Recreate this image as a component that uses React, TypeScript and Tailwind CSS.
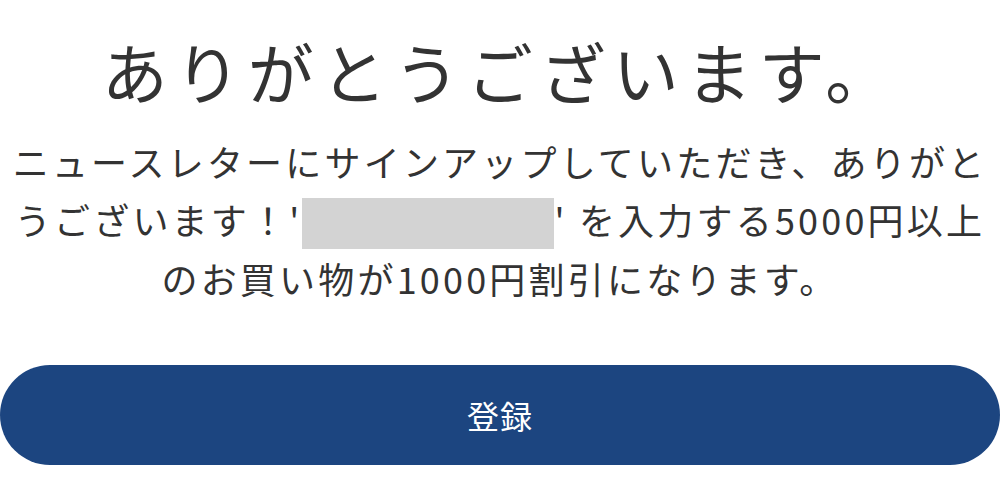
import React from 'react';

const font = { fontFamily: '"Noto Sans CJK JP", "Noto Sans", sans-serif' };

export default function App() {
  return (
    <div className="w-[1000px] h-[487px] bg-white overflow-hidden text-center text-[#333333]" style={font}>
      {/* Heading */}
      <h1 className="pt-[32px] text-[66px] leading-[76px] font-normal tracking-[7px] whitespace-nowrap">
        ありがとうございます。
      </h1>

      {/* Message */}
      <p className="mt-[24px] text-[36px] leading-[58px] tracking-[3.2px] whitespace-nowrap">
        ニュースレターにサインアップしていただき、ありがと
        <br />
        うございます！'
        <span className="inline-block align-middle w-[252px] h-[51px] bg-[#d3d3d3] -mt-[4px]" />
        ' を入力する5000円以上
        <br />
        のお買い物が1000円割引になります。
      </p>

      {/* Submit */}
      <button className="mt-[58px] w-full h-[100px] rounded-full bg-[#1c4580] text-white text-[32px] tracking-[1px]">
        登録
      </button>
    </div>
  );
}
